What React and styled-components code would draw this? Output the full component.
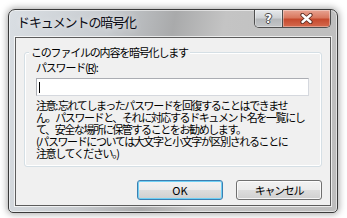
import React from 'react';
import styled, { createGlobalStyle } from 'styled-components';

const GlobalStyle = createGlobalStyle`
  html, body {
    margin: 0;
    padding: 0;
    background: #fff;
  }
  body {
    font-family: "Noto Sans CJK JP", "Noto Sans", sans-serif;
    color: #000;
  }
`;

const Page = styled.div`
  width: 347px;
  height: 218px;
  box-sizing: border-box;
  padding: 9px 9px 5px 8px;
  display: flex;
`;

const Window = styled.div`
  flex: 1;
  display: flex;
  flex-direction: column;
  padding: 0 6px 6px 6px;
  border: 1px solid #3a3a3a;
  border-radius: 7px 7px 5px 5px;
  background: linear-gradient(100deg, #d9dee3 0%, #c7cbcf 28%, #a9aaab 46%, #c4c4c4 60%, #bdbdbd 100%);
  box-shadow: 0 0 7px 1px rgba(0, 0, 0, 0.35), inset 0 0 0 1px rgba(255, 255, 255, 0.55);
`;

const TitleBar = styled.div`
  height: 27px;
  display: flex;
  justify-content: space-between;
  align-items: flex-start;
`;

const Title = styled.span`
  margin: 4px 0 0 2px;
  font-size: 13px;
  line-height: 16px;
  letter-spacing: -1.1px;
  color: #0b0b14;
  text-shadow: 0 0 6px rgba(255, 255, 255, 0.7);
`;

const CaptionButtons = styled.div`
  display: flex;
  height: 18px;
  box-sizing: border-box;
  border: 1px solid #4e4e4e;
  border-top: 0;
  border-radius: 0 0 5px 5px;
  overflow: hidden;
`;

const CaptionButton = styled.div`
  width: ${p => p.$w}px;
  display: flex;
  align-items: center;
  justify-content: center;
  box-shadow: inset 0 0 0 1px rgba(255, 255, 255, 0.35);
  background: ${p => p.$close
    ? 'linear-gradient(180deg, #e8a493 0%, #d9785f 45%, #c64a2e 55%, #d56a4e 100%)'
    : 'linear-gradient(180deg, #e6e9ec 0%, #cfd2d5 45%, #b5b8bb 55%, #c4c6c8 100%)'};
  & + & {
    border-left: 1px solid #4e4e4e;
  }
`;

const HelpGlyph = styled.span`
  font-family: "DejaVu Sans", sans-serif;
  font-weight: bold;
  font-size: 12px;
  line-height: 12px;
  color: #fff;
  text-shadow: 1px 0 #4a4a4a, -1px 0 #4a4a4a, 0 1px #4a4a4a, 0 -1px #4a4a4a;
`;

const Client = styled.div`
  flex: 1;
  display: flex;
  flex-direction: column;
  background: #f0f0f0;
  border: 1px solid #5c5c5c;
  box-shadow: 0 0 0 1px rgba(255, 255, 255, 0.7);
`;

const Group = styled.fieldset`
  margin: 7px 8px 0 8px;
  padding: 1px 12px 7px 11px;
  border: 1px solid #d5dfe5;
  border-radius: 3px;
  box-shadow: inset 0 0 0 1px #fff;
`;

const Legend = styled.legend`
  margin-left: -7px;
  padding: 0 2px;
  font-size: 11px;
  line-height: 14px;
  letter-spacing: -1.2px;
  background: #f0f0f0;
`;

const Label = styled.div`
  font-size: 11px;
  line-height: 14px;
  letter-spacing: -1.2px;

  u {
    text-decoration: underline;
    text-underline-offset: 1px;
  }
`;

const TextBox = styled.div`
  margin-top: 4px;
  height: 18px;
  box-sizing: border-box;
  background: #fff;
  border: 1px solid #abadb3;
  border-right-color: #d5d8de;
  border-bottom-color: #d5d8de;
  display: flex;
  align-items: center;
  padding-left: 2px;
`;

const Caret = styled.span`
  width: 1px;
  height: 11px;
  background: #000;
`;

const Note = styled.div`
  margin-top: 3px;
  font-size: 11px;
  line-height: 12px;
  letter-spacing: -1.4px;
  white-space: nowrap;
`;

const ButtonRow = styled.div`
  margin-top: 13px;
  padding-right: 8px;
  display: flex;
  justify-content: flex-end;
  gap: 13px;
`;

const Button = styled.button`
  width: 86px;
  height: 20px;
  padding: 0;
  font-family: "Noto Sans CJK JP", "Noto Sans", sans-serif;
  font-size: 11px;
  line-height: 18px;
  letter-spacing: ${p => (p.$default ? '0' : '-1.3px')};
  color: #000;
  border: 1px solid ${p => (p.$default ? '#3c7fb1' : '#707070')};
  border-radius: 3px;
  background: linear-gradient(180deg, #f2f2f2 0%, #ebebeb 48%, #dddddd 52%, #cfcfcf 100%);
  box-shadow: inset 0 0 0 1px ${p => (p.$default ? '#6fd0f5' : 'rgba(255,255,255,0.8)')};
`;

const noteLines = [
  '注意: 忘れてしまったパスワードを回復することはできませ',
  'ん。パスワードと、それに対応するドキュメント名を一覧にし',
  'て、安全な場所に保管することをお勧めします。',
  '(パスワードについては大文字と小文字が区別されることに',
  '注意してください。)',
];

function CloseIcon() {
  return (
    <svg width="13" height="11" viewBox="0 0 13 11">
      <path d="M2.5 2 L10.5 9 M10.5 2 L2.5 9" stroke="#5a2a20" strokeWidth="4.2" strokeLinecap="round" />
      <path d="M2.5 2 L10.5 9 M10.5 2 L2.5 9" stroke="#fff" strokeWidth="2.4" strokeLinecap="round" />
    </svg>
  );
}

export default function App() {
  return (
    <>
      <GlobalStyle />
      <Page>
        <Window>
          <TitleBar>
            <Title>ドキュメントの暗号化</Title>
            <CaptionButtons>
              <CaptionButton $w={27}>
                <HelpGlyph>?</HelpGlyph>
              </CaptionButton>
              <CaptionButton $w={47} $close>
                <CloseIcon />
              </CaptionButton>
            </CaptionButtons>
          </TitleBar>
          <Client>
            <Group>
              <Legend>このファイルの内容を暗号化します</Legend>
              <Label>パスワード(<u>R</u>):</Label>
              <TextBox>
                <Caret />
              </TextBox>
              <Note>
                {noteLines.map(line => (
                  <div key={line}>{line}</div>
                ))}
              </Note>
            </Group>
            <ButtonRow>
              <Button $default>OK</Button>
              <Button>キャンセル</Button>
            </ButtonRow>
          </Client>
        </Window>
      </Page>
    </>
  );
}
